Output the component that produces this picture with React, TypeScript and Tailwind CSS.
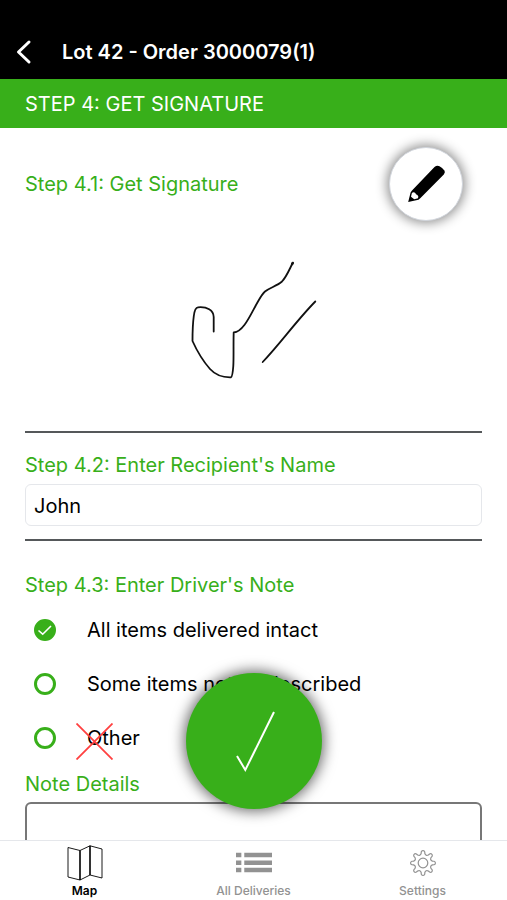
import React, { useState } from 'react';

const notes = ['All items delivered intact', 'Some items not as described', 'Other'];

// eight-toothed cog outline around the origin
const cogPath = (() => {
  const point = (radius: number, degrees: number) => {
    const angle = (degrees * Math.PI) / 180;
    return `${(radius * Math.cos(angle)).toFixed(2)} ${(radius * Math.sin(angle)).toFixed(2)}`;
  };
  let d = '';
  for (let i = 0; i < 8; i++) {
    const a = i * 45 - 90;
    d += `${i === 0 ? 'M' : 'L'}${point(9.6, a - 11)} L${point(11.2, a - 9)} Q${point(12.6, a - 6)} ${point(12.4, a)} Q${point(12.6, a + 6)} ${point(11.2, a + 9)} L${point(9.6, a + 11)} Q${point(7.4, a + 22.5)} ${point(9.6, a + 34)} `;
  }
  return d + 'Z';
})();

const MapIcon = () => (
  <svg viewBox="0 0 36 36" className="w-9 h-9" fill="none" stroke="currentColor" strokeLinejoin="round" aria-hidden="true">
    <path d="M1 2.500 L13 5.500 L23 0.800 L35 4 V33 L23 30 L13 35 L1 32 Z" strokeWidth="0.900" />
    <path d="M13 5.500 V35 M23 0.800 V30" strokeWidth="1.600" />
  </svg>
);

const ListIcon = () => (
  <svg viewBox="0 0 37 36" className="w-9 h-9" fill="currentColor" aria-hidden="true">
    <path d="M0 7.500h5.500v4.500H0z M8.500 7.500H37v4.500H8.500z M0 15.500h5.500V20H0z M8.500 15.500H37V20H8.500z M0 23h5.500v4.500H0z M8.500 23H37v4.500H8.500z" />
  </svg>
);

const CogIcon = () => (
  <svg viewBox="-18 -18 36 36" className="w-9 h-9" fill="none" stroke="currentColor" strokeWidth="1.200" strokeLinejoin="round" aria-hidden="true">
    <path d={cogPath} />
    <circle r="4.800" />
  </svg>
);

const tabs = [
  { label: 'Map', icon: MapIcon },
  { label: 'All Deliveries', icon: ListIcon },
  { label: 'Settings', icon: CogIcon }
];

const App: React.FC = () => {
  const [name, setName] = useState('John');
  const [note, setNote] = useState(0);
  const [details, setDetails] = useState('');
  const [activeTab, setActiveTab] = useState('Map');

  return (
    <div className="h-screen flex flex-col bg-white text-black text-xl leading-7 font-['Inter','Liberation_Sans',sans-serif]">
      <header className="shrink-0">
        <div className="flex items-center gap-7 bg-black text-white pt-6 px-4 h-[79px]">
          <button type="button" aria-label="Back" className="shrink-0">
            <svg viewBox="0 0 18 26" className="w-[18px] h-[26px]" fill="none" stroke="currentColor" strokeWidth="3" strokeLinecap="round" strokeLinejoin="round">
              <path d="M13 3 L2.500 13 L13 23" />
            </svg>
          </button>
          <h1 className="font-semibold truncate">Lot 42 - Order 3000079(1)</h1>
        </div>
        <h2 className="flex items-center h-[49px] px-[25px] bg-[#38af1a] text-white">STEP 4: GET SIGNATURE</h2>
      </header>

      <div className="relative flex-1 min-h-0">
        <main className="h-full overflow-y-auto [scrollbar-width:none] px-[25px] pb-6">
          <section className="border-b-2 border-[#55585a] pt-[19px]">
            <div className="flex items-center justify-between pr-[19px]">
              <h3 className="text-[#38af1a]">Step 4.1: Get Signature</h3>
              <button type="button" aria-label="Edit signature" className="w-[74px] h-[74px] rounded-full bg-white border border-gray-300 shadow-[0_0_12px_2px_rgba(0,0,0,0.45)]">
                <svg viewBox="0 0 72 72" className="w-[72px] h-[72px]" aria-hidden="true">
                  <path d="M18.200 54 L20.600 44.500 L22 42.600 L44.500 19 Q47 16.800 49.500 18.200 Q53 20 54.600 22.800 Q55.400 24.500 53.800 26.500 L30.500 50 L28.500 51.800 Z" fill="#000" />
                  <path d="M21.900 45 Q23.500 43.600 25.300 45 Q25.600 46.600 27.400 46.900 Q29 48.400 28 50.200 L24.200 51.200 L21 48.700 Z" fill="#fff" />
                </svg>
              </button>
            </div>
            <svg viewBox="0 0 171 210" className="block mx-auto w-[171px] h-[210px]" fill="none" stroke="#111" strokeWidth="1.800" strokeLinecap="round" strokeLinejoin="round" role="img" aria-label="Signature">
              <path d="M45.700 110.500 V96 C45.500 89 39 85.500 30 86.300 C27.500 86.500 26.500 89 25.800 95 C24.700 103 24.500 111 24.500 120 C29 130 35 140 42 148 C47 153.500 55 156.500 63 156.300 C64.500 155.500 64.800 152 65.300 145 C65.800 136 65.300 123 65.700 111.500 C75 111 82 95 88 84 C91 79 93.500 73.500 97 70.500 C102 66.500 109 65 114 60.500 C119 55 121.500 48 124.700 42" />
              <path d="M94.700 141 C112 123 129 99 147.300 80.500" />
              <path d="M124.200 43 L124.700 42" strokeWidth="2.600" />
            </svg>
          </section>

          <section className="border-b-2 border-[#55585a] pt-[18px] pb-[13px]">
            <label htmlFor="recipient" className="block text-[#38af1a]">Step 4.2: Enter Recipient's Name</label>
            <input
              id="recipient"
              type="text"
              value={name}
              onChange={(e) => setName(e.target.value)}
              className="mt-[5px] block w-full h-[42px] px-2 pt-0.5 rounded-md border border-gray-200 bg-white outline-none"
            />
          </section>

          <section className="pt-[30px]">
            <fieldset>
              <legend className="text-[#38af1a] mb-1">Step 4.3: Enter Driver's Note</legend>
              {notes.map((text, index) => (
                <div key={text} className="relative flex items-center h-[54px] pl-[9px]">
                  <label className="flex items-center gap-[31px]">
                    <span className="grid place-items-center">
                      <input
                        type="radio"
                        name="note"
                        checked={note === index}
                        onChange={() => setNote(index)}
                        className="peer col-start-1 row-start-1 appearance-none w-[22px] h-[22px] rounded-full border-[3px] border-[#38af1a] checked:bg-[#38af1a]"
                      />
                      <svg viewBox="0 0 22 22" className="col-start-1 row-start-1 w-[22px] h-[22px] pointer-events-none invisible peer-checked:visible" fill="none" stroke="#fff" strokeWidth="1.600" aria-hidden="true">
                        <path d="M4.500 11.500 L8.700 15.200 L17 7" />
                      </svg>
                    </span>
                    {text}
                  </label>
                  {text === 'Other' && (
                    <button type="button" aria-label="Clear note" className="absolute left-[51px] top-3 text-[#ff4040]">
                      <svg viewBox="0 0 37 37" className="w-[37px] h-[37px]" fill="none" stroke="currentColor" strokeWidth="1.800">
                        <path d="M0.500 0.500 L36.500 36.500 M36.500 0.500 L0.500 36.500" />
                      </svg>
                    </button>
                  )}
                </div>
              ))}
            </fieldset>
            <label htmlFor="details" className="block mt-[5px] mb-1 text-[#38af1a]">Note Details</label>
            <textarea
              id="details"
              rows={4}
              value={details}
              onChange={(e) => setDetails(e.target.value)}
              className="block w-full p-2 rounded-md border-2 border-[#777] outline-none resize-none"
            />
          </section>
        </main>

        <button
          type="button"
          aria-label="Confirm"
          className="absolute bottom-[31px] left-1/2 -translate-x-1/2 w-[136px] h-[136px] rounded-full bg-[#38af1a] shadow-[0_0_14px_2px_rgba(0,0,0,0.6)]"
        >
          <svg viewBox="0 0 136 136" className="w-full h-full" fill="none" stroke="#fff" strokeWidth="2" aria-hidden="true">
            <path d="M51 83 L59.300 97 L88 39" />
          </svg>
        </button>
      </div>

      <nav className="shrink-0 grid grid-cols-3 h-[60px] pt-1 border-t border-gray-200 bg-white">
        {tabs.map(({ label, icon: Icon }) => (
          <button
            key={label}
            type="button"
            onClick={() => setActiveTab(label)}
            className={`flex flex-col items-center gap-0.5 text-xs ${
              activeTab === label ? 'text-black font-semibold' : 'text-[#929292] font-medium'
            }`}
          >
            <Icon />
            <span>{label}</span>
          </button>
        ))}
      </nav>
    </div>
  );
};

export default App;
